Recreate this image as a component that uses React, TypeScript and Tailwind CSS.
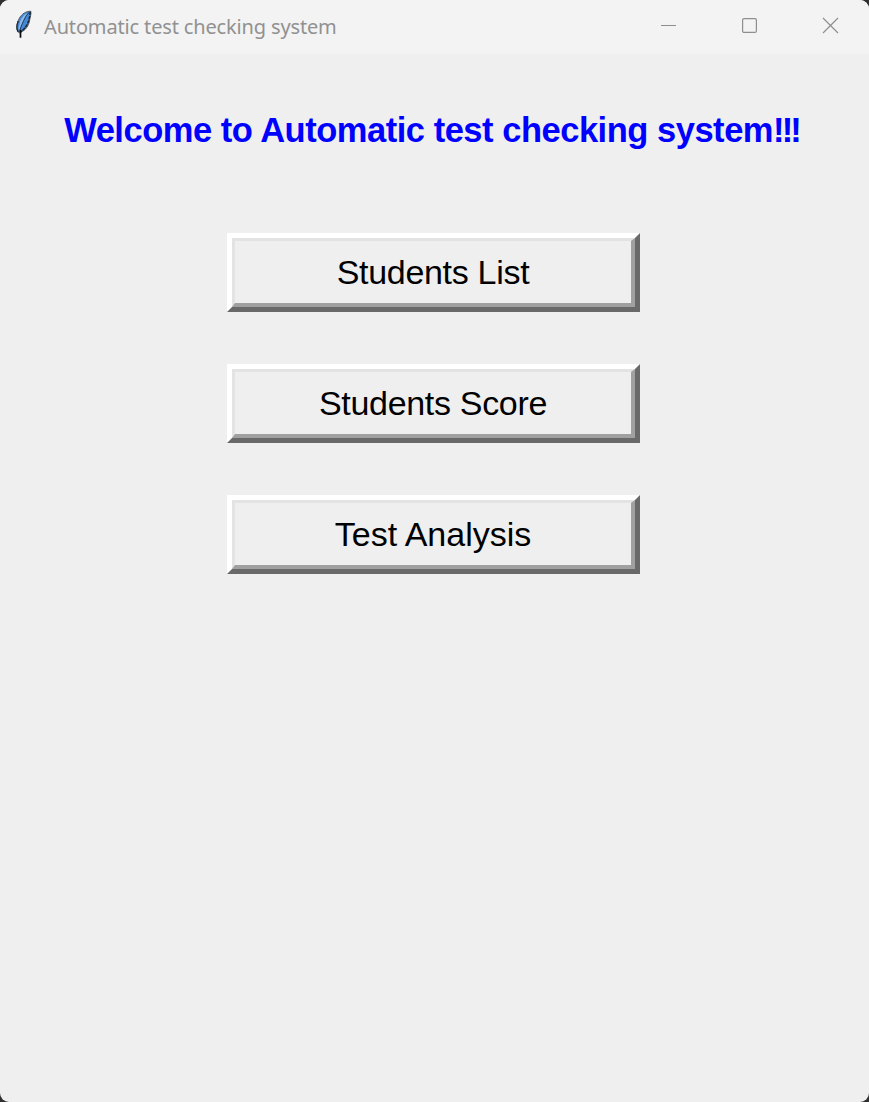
const actions = [
  { label: "Students List", tracking: "tracking-[-0.3px]" },
  { label: "Students Score", tracking: "tracking-[-0.32px]" },
  { label: "Test Analysis", tracking: "tracking-[0px]" },
];

function Feather() {
  return (
    <svg width="18" height="30" viewBox="0 0 18 30" aria-hidden="true">
      <path d="M15.8 1.200C11 1.200 6.500 4 4.200 8.500C2 13 1.500 18.500 3.200 22L4.800 23L7 21.500C10.500 20 13.500 16 14.500 11C15 7 16.500 4 15.800 1.200Z" fill="#4489d6" stroke="#555b62" strokeWidth="1" />
      <path d="M12.500 3.200C9 4.500 6.600 7.500 5.200 11.500L3.400 18.500L5 19.500L8 12Z" fill="#8fb9e6" />
      <path d="M15.300 1.800L14.800 6L13.600 11L12 15L9 19L5.500 22" fill="none" stroke="#20262e" strokeWidth="1.500" strokeDasharray="3.500 0.800" />
      <path d="M3.200 11L1.900 15V19L3.200 22" fill="none" stroke="#20262e" strokeWidth="1.300" />
      <path d="M14.500 2L11 6L8 12L5.500 18L5 22" fill="none" stroke="#1d3b62" strokeWidth="1" />
      <path d="M5.500 20V27.800" stroke="#080b10" strokeWidth="1.700" />
    </svg>
  );
}

export default function App() {
  return (
    <div className="h-[1102px] w-[869px] overflow-hidden bg-[#303030]">
      <div className="flex h-full flex-col overflow-hidden rounded-[9px] bg-[#efefef]">
        <header className="flex h-[54px] shrink-0 items-start bg-[#f3f3f3] pl-[15px]">
          <div className="pt-[10px]"><Feather /></div>
          <h1 className="ml-[11px] mt-[12px] whitespace-nowrap font-['Noto_Sans',sans-serif] text-[20px] leading-[30px] tracking-[-0.15px] text-[#919191]">
            Automatic test checking system
          </h1>
          <div className="ml-auto flex pt-[17px]">
            <button aria-label="Minimize" className="flex w-[81px] justify-center">
              <svg width="17" height="17" viewBox="0 0 17 17"><path d="M1 8.500H16" stroke="#8e8e8e" /></svg>
            </button>
            <button aria-label="Maximize" className="flex w-[81px] justify-center">
              <svg width="17" height="17" viewBox="0 0 17 17"><rect x="1.600" y="1.600" width="13.800" height="13.800" rx="1.500" fill="none" stroke="#8e8e8e" strokeWidth="1.200" /></svg>
            </button>
            <button aria-label="Close" className="flex w-[79px] justify-center pl-[2px]">
              <svg width="17" height="17" viewBox="0 0 17 17"><path d="M1 1L16 16M16 1L1 16" stroke="#8e8e8e" strokeWidth="1.200" /></svg>
            </button>
          </div>
        </header>
        <main className="flex flex-col items-center pr-[2px] font-['Liberation_Sans',Arial,sans-serif]">
          <h2 className="mt-[56px] whitespace-nowrap pr-[4px] text-[34.5px] font-bold leading-[40px] tracking-[-0.48px] text-[#0000ff]">
            Welcome to Automatic test checking system<span className="tracking-[-2.9px]">!!!</span>
          </h2>
          <div className="mt-[83px] flex w-[413px] flex-col gap-[52px]">
            {actions.map(({ label, tracking }) => (
              <button
                key={label}
                className="h-[79px] border-[5px] border-t-white border-r-[#696969] border-b-[#696969] border-l-white"
              >
                <span className="flex h-full w-full items-center justify-center border-t-[3px] border-r-[4px] border-b-[4px] border-l-[3px] border-t-[#e3e3e3] border-r-[#a0a0a0] border-b-[#a0a0a0] border-l-[#e3e3e3] text-[34px] leading-[40px] text-black">
                  <span className={`whitespace-nowrap ${tracking}`}>{label}</span>
                </span>
              </button>
            ))}
          </div>
        </main>
      </div>
    </div>
  );
}
